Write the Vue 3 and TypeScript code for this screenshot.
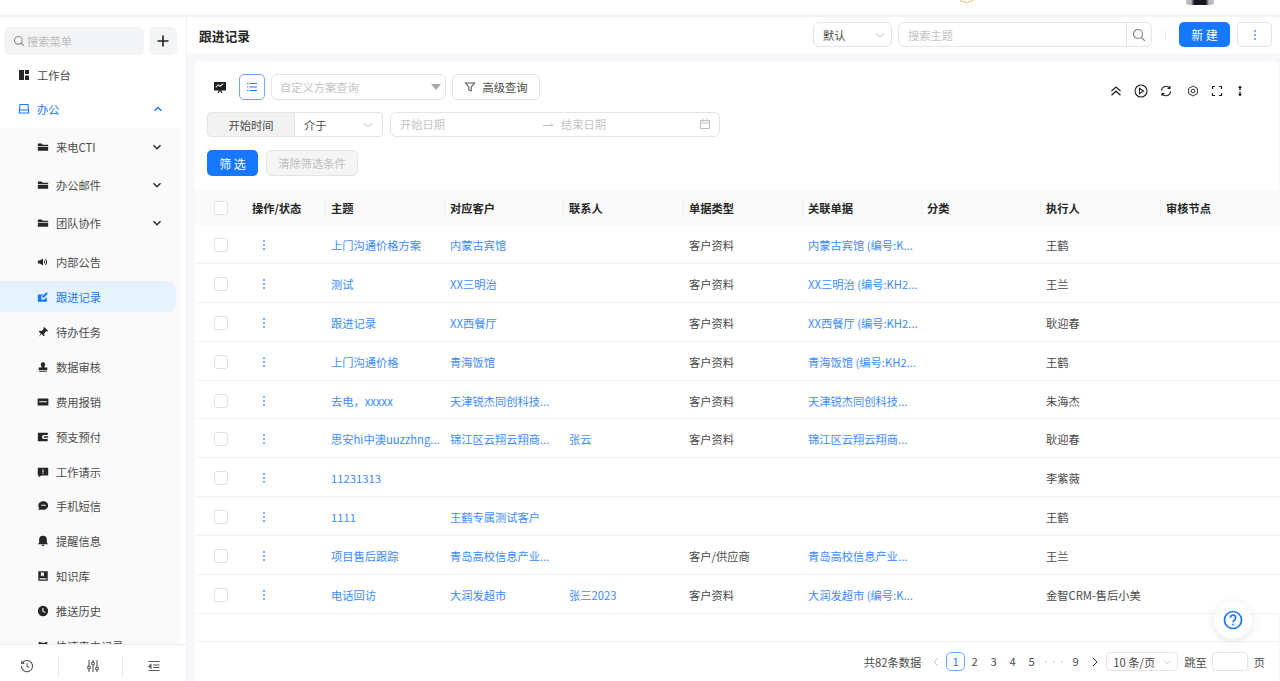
<script setup lang="ts">
interface Nav { label: string; icon: string; arrow?: boolean; active?: boolean }
const icons: Record<string, string> = {
  folder: 'M1 3h4.500l1.200 1.500H13v1.200H1zM1 6.600h12V11.500H1z',
  speaker: 'M1 5.200h2.400L7 3v8L3.400 8.800H1zM8.200 4.600c1.400.8 1.400 4 0 4.800zM10 3.400c2.400 1.400 2.400 5.800 0 7.200l-.6-.8c1.600-1.200 1.600-4.400 0-5.600z',
  edit: 'M1 4h6.500L5 6.500V10h3.500L11.500 7v5.500H1zM10.800 1.500l1.700 1.700L8 7.800H6.300V6z',
  pin: 'M8 1l5 4.600-1.200.8-1-.3-2.300 2.400.3 2.500-1 1-2.300-2.600L2 12.500l2.400-3.800L2 6.600l1-1 2.400.2 2.200-2.400z',
  stamp: 'M7 1.500a2.600 2.600 0 0 1 1.700 4.600V7.500h3.300v3H2v-3h3.300V6.100A2.600 2.600 0 0 1 7 1.500zM2.500 11.300h9v1.200h-9z',
  card: 'M1.500 2.800h11a.8.8 0 0 1 .8.8v6.800a.8.8 0 0 1-.8.8h-11a.8.8 0 0 1-.8-.8V3.600a.8.8 0 0 1 .8-.8zM2.500 6v1.300h9V6z',
  wallet: 'M1 2h11.500v2.800H8a2.200 2.200 0 0 0 0 4.400h4.500V12H1zM8 6h5v2H8z',
  alert: 'M1.500 2h11a.6.6 0 0 1 .6.6v7.800a.6.6 0 0 1-.6.6H5l-3 2v-2h-.5a.6.6 0 0 1-.6-.6V2.600a.6.6 0 0 1 .6-.6zM6.400 4v3.200h1.200V4zM6.400 8v1.200h1.200V8z',
  chat: 'M7.500 1.500c3 0 5.500 2.200 5.500 5s-2.500 5-5.500 5H1.500l1-2.300C1.800 8.300 1.500 7.400 1.500 6.500c0-2.800 2.800-5 6-5zM5 5.500v1.300h5V5.500z',
  bell: 'M7 1a4.500 4.500 0 0 1 4.500 4.500V9l1.500 1.800H1L2.500 9V5.500A4.500 4.500 0 0 1 7 1zM5.500 11.500h3a1.500 1.500 0 0 1-3 0z',
  book: 'M1.500 1.500h11v11h-11zM4.500 2.800v4.700L6.200 6.300 8 7.500V2.800zM3 9.500v1.700h8V9.500z',
  clock: 'M7 1a6 6 0 1 1 0 12A6 6 0 0 1 7 1zM6.300 3.500V7.600l3.300 1.800.6-1-2.700-1.400V3.500z',
  quick: 'M2 2l5 1.500L12 2v7.500L7 11l-5-1.500z',
}
const subTop: Nav[] = [
  { label: '来电CTI', icon: 'folder', arrow: true },
  { label: '办公邮件', icon: 'folder', arrow: true },
  { label: '团队协作', icon: 'folder', arrow: true },
]
const subItems: Nav[] = [
  { label: '内部公告', icon: 'speaker' },
  { label: '跟进记录', icon: 'edit', active: true },
  { label: '待办任务', icon: 'pin' },
  { label: '数据审核', icon: 'stamp' },
  { label: '费用报销', icon: 'card' },
  { label: '预支预付', icon: 'wallet' },
  { label: '工作请示', icon: 'alert' },
  { label: '手机短信', icon: 'chat' },
  { label: '提醒信息', icon: 'bell' },
  { label: '知识库', icon: 'book' },
  { label: '推送历史', icon: 'clock' },
  { label: '快速来电记录', icon: 'quick' },
]
const columns = ['主题', '对应客户', '联系人', '单据类型', '关联单据', '分类', '执行人', '审核节点']
const rows = [
  ['上门沟通价格方案', '内蒙古宾馆', '', '客户资料', '内蒙古宾馆 (编号:K...', '王鹤'],
  ['测试', 'XX三明治', '', '客户资料', 'XX三明治 (编号:KH2...', '王兰'],
  ['跟进记录', 'XX西餐厅', '', '客户资料', 'XX西餐厅 (编号:KH2...', '耿迎春'],
  ['上门沟通价格', '青海饭馆', '', '客户资料', '青海饭馆 (编号:KH2...', '王鹤'],
  ['去电，xxxxx', '天津锐杰同创科技...', '', '客户资料', '天津锐杰同创科技...', '朱海杰'],
  ['思安hi中澳uuzzhng...', '锦江区云翔云翔商...', '张云', '客户资料', '锦江区云翔云翔商...', '耿迎春'],
  ['11231313', '', '', '', '', '李紫薇'],
  ['1111', '王鹤专属测试客户', '', '', '', '王鹤'],
  ['项目售后跟踪', '青岛高校信息产业...', '', '客户/供应商', '青岛高校信息产业...', '王兰'],
  ['电话回访', '大润发超市', '张三2023', '客户资料', '大润发超市 (编号:K...', '金智CRM-售后小美'],
]
const pages = ['2', '3', '4', '5']
</script>

<template>
  <div class="page">
    <header class="topbar">
      <span class="orange-ring"></span>
      <span class="avatar"></span>
    </header>
    <div class="body">
      <aside class="sider">
        <div class="search-line">
          <div class="menu-search">
            <svg width="12" height="12" viewBox="0 0 12 12" fill="none" stroke="#8c8c8c" stroke-width="1.100"><circle cx="5.300" cy="5.300" r="3.800"/><path d="M8.200 8.200l2.600 2.600"/></svg>
            <span>搜索菜单</span>
          </div>
          <button class="plus-btn">
            <svg width="14" height="14" viewBox="0 0 14 14" stroke="#1f1f1f" stroke-width="1.600"><path d="M7 1.500v11M1.500 7h11"/></svg>
          </button>
        </div>
        <div class="menu">
          <div class="top-item">
            <svg class="nav-icon" width="14" height="14" viewBox="0 0 14 14" fill="#262626"><path d="M2 2h5v10H2zM8 2h4v4H8zM8 7.500h4V12H8z"/></svg>
            <span>工作台</span>
          </div>
          <div class="top-item open">
            <svg class="nav-icon" width="14" height="14" viewBox="0 0 14 14" fill="none" stroke="#1677ff" stroke-width="1.100"><path d="M3 2.500h8l.8 8.500H2.200zM2.500 8h9"/></svg>
            <span>办公</span>
            <svg class="arrow" width="10" height="10" viewBox="0 0 10 10" fill="none" stroke="#1677ff" stroke-width="1.400"><path d="M1.500 6.800L5 3.500l3.500 3.300"/></svg>
          </div>
          <div class="submenu">
            <div v-for="n in subTop" :key="n.label" class="sub-item folder-row">
              <svg width="12" height="12" viewBox="0 0 14 14" fill="#262626"><path :d="icons[n.icon]"/></svg>
              <span>{{ n.label }}</span>
              <svg class="arrow" width="10" height="10" viewBox="0 0 10 10" fill="none" stroke="#262626" stroke-width="1.400"><path d="M1.500 3.300L5 6.700l3.500-3.400"/></svg>
            </div>
            <div v-for="n in subItems" :key="n.label" class="sub-item" :class="{ active: n.active }">
              <svg width="12" height="12" viewBox="0 0 14 14" :fill="n.active ? '#1677ff' : '#262626'" fill-rule="evenodd"><path :d="icons[n.icon]"/></svg>
              <span>{{ n.label }}</span>
            </div>
          </div>
        </div>
        <div class="sider-foot">
          <div class="foot-cell">
            <svg class="foot-clock" width="14" height="14" viewBox="0 0 14 14" fill="none" stroke="#595959" stroke-width="1.100"><path d="M2.200 4.200A5.600 5.600 0 1 1 1.400 7M1.700 1.800v2.600h2.600M7 4v3.300l2.300 1.300"/></svg>
          </div>
          <div class="foot-cell">
            <svg class="foot-right" width="14" height="14" viewBox="0 0 14 14" fill="none" stroke="#595959" stroke-width="1.100"><path d="M3 1v6M3 10v3M7 1v2M7 6v7M11 1v7M11 11v2"/><circle cx="3" cy="8.500" r="1.400"/><circle cx="7" cy="4.500" r="1.400"/><circle cx="11" cy="9.500" r="1.400"/></svg>
          </div>
          <div class="foot-cell">
            <svg class="foot-right" width="14" height="14" viewBox="0 0 14 14" fill="none" stroke="#595959" stroke-width="1.100"><path d="M1.500 2.500h11M6 6h6.500M6 8.500h6.500M1.500 11.500h11M4 5.500L1.800 7.200 4 9z"/></svg>
          </div>
        </div>
      </aside>

      <main class="main">
        <div class="titlebar">
          <h1>跟进记录</h1>
          <div class="title-tools">
            <div class="select default-select"><span>默认</span>
              <svg width="12" height="12" viewBox="0 0 12 12" fill="none" stroke="#bfbfbf"><path d="M2 4.200L6 8l4-3.800"/></svg>
            </div>
            <div class="theme-search">
              <span class="ph">搜索主题</span>
              <span class="search-btn">
                <svg width="14" height="14" viewBox="0 0 14 14" fill="none" stroke="#7f7f7f" stroke-width="1.200"><circle cx="6" cy="6" r="4.500"/><path d="M9.300 9.300l3.500 3.500"/></svg>
              </span>
            </div>
            <i class="mini-divider"></i>
            <button class="primary new-btn">新 建</button>
            <button class="more-btn"><i></i><i></i><i></i></button>
          </div>
        </div>

        <section class="card">
          <div class="filters">
            <div class="filter-row first">
              <svg class="board" width="14" height="14" viewBox="0 0 14 14" fill="#1f1f1f" fill-rule="evenodd"><path d="M1 2h12v8.500H8.200l1.300 2.500H8.200L7 10.800 5.800 13H4.500l1.300-2.500H1zM3 7.800l2.400-2.200 1.700 1.300L10.500 4l-.6-.7L7 5.500 5.300 4.300 2.500 6.900z"/></svg>
              <button class="list-btn">
                <svg width="12" height="12" viewBox="0 0 12 12" stroke="#1677ff" stroke-width="1.200"><path d="M3.500 2.500H11M3.500 6H11M3.500 9.500H11M1 2.500h1.200M1 6h1.200M1 9.500h1.200"/></svg>
              </button>
              <div class="plan-select"><span class="ph">自定义方案查询</span>
                <svg width="10" height="8" viewBox="0 0 10 8" fill="#a6a6a6"><path d="M0 1h10L5 7z"/></svg>
              </div>
              <button class="adv-btn">
                <svg width="12" height="12" viewBox="0 0 12 12" fill="none" stroke="#595959" stroke-width="1.100"><path d="M1.500 2h9L7.200 6v4L4.800 9V6z"/></svg>
                <span>高级查询</span>
              </button>
              <div class="table-tools">
                <svg class="t1" width="12" height="12" viewBox="0 0 12 12" fill="none" stroke="#1f1f1f" stroke-width="1.300"><path d="M1.500 6L6 2l4.500 4M1.500 10.200L6 6.200l4.500 4"/></svg>
                <svg class="t2" width="14" height="14" viewBox="0 0 14 14" fill="none" stroke="#1f1f1f" stroke-width="1.100"><circle cx="7" cy="7" r="6"/><path d="M5.500 4.300L9.500 7l-4 2.700z"/></svg>
                <svg class="t3" width="12" height="12" viewBox="0 0 12 12" fill="none" stroke="#1f1f1f" stroke-width="1.100"><path d="M1.500 5.500A4.500 4.500 0 0 1 9.700 3.200M10.500 6.500A4.500 4.500 0 0 1 2.300 8.800M10 1v2.500H7.500M2 11V8.500h2.500"/></svg>
                <svg class="t4" width="12" height="12" viewBox="0 0 12 12" fill="none" stroke="#333" stroke-width="1" stroke-linejoin="round"><path d="M6 1l4.400 2.500v5L6 11 1.600 8.500v-5z"/><circle cx="6" cy="6" r="1.800"/></svg>
                <svg class="t5" width="12" height="12" viewBox="0 0 12 12" fill="none" stroke="#1f1f1f" stroke-width="1.200"><path d="M1.500 4V1.500H4M8 1.500h2.500V4M10.500 8v2.500H8M4 10.500H1.500V8"/></svg>
                <svg class="t6" width="12" height="12" viewBox="0 0 12 12" fill="#1f1f1f"><path d="M6 .5L8 3H6.700v2.200H5.300V3H4zM5.300 6.800h1.400V9H8l-2 2.500L4 9h1.300z"/></svg>
              </div>
            </div>
            <div class="filter-row second">
              <div class="field-label">开始时间</div>
              <div class="select between"><span>介于</span>
                <svg width="12" height="12" viewBox="0 0 12 12" fill="none" stroke="#bfbfbf"><path d="M2 4.200L6 8l4-3.800"/></svg>
              </div>
              <div class="date-range">
                <span class="ph date-a">开始日期</span>
                <svg width="12" height="8" viewBox="0 0 12 8" fill="none" stroke="#bfbfbf"><path d="M1 5.500h10L8.500 3.500"/></svg>
                <span class="ph date-b">结束日期</span>
                <svg class="cal" width="12" height="12" viewBox="0 0 12 12" fill="none" stroke="#bfbfbf"><path d="M1.500 2.500h9v8h-9zM1.500 5h9M4 1v2.500M8 1v2.500"/></svg>
              </div>
            </div>
            <div class="filter-row third">
              <button class="primary filter-btn">筛 选</button>
              <button class="clear-btn">清除筛选条件</button>
            </div>
          </div>

          <table class="grid">
            <colgroup>
              <col class="c50" /><col class="c80" />
              <col class="c119" /><col class="c119" /><col class="c120" /><col class="c119" />
              <col class="c119" /><col class="c119" /><col class="c120" /><col class="c120" />
            </colgroup>
            <thead>
              <tr>
                <th class="check-cell"><span class="check"></span></th>
                <th class="op-head">操作/状态</th>
                <th v-for="c in columns" :key="c"><span class="col-sep"></span>{{ c }}</th>
              </tr>
            </thead>
            <tbody>
              <tr v-for="(r, i) in rows" :key="i">
                <td class="check-cell"><span class="check"></span></td>
                <td class="kebab-cell"><span class="kebab"><i></i><i></i><i></i></span></td>
                <td class="link">{{ r[0] }}</td>
                <td class="link">{{ r[1] }}</td>
                <td class="link">{{ r[2] }}</td>
                <td>{{ r[3] }}</td>
                <td class="link">{{ r[4] }}</td>
                <td></td>
                <td>{{ r[5] }}</td>
                <td></td>
              </tr>
            </tbody>
          </table>

          <div class="spacer"></div>

          <footer class="pager">
            <span class="total">共82条数据</span>
            <svg class="pg-arrow" width="10" height="10" viewBox="0 0 10 10" fill="none" stroke="#bfbfbf"><path d="M7 1L3 5l4 4"/></svg>
            <span class="pg current">1</span>
            <span v-for="p in pages" :key="p" class="pg">{{ p }}</span>
            <span class="pg dots">•••</span>
            <span class="pg">9</span>
            <svg class="pg-arrow" width="10" height="10" viewBox="0 0 10 10" fill="none" stroke="#333"><path d="M3 1l4 4-4 4"/></svg>
            <div class="size-select"><span>10 条/页</span>
              <svg width="10" height="10" viewBox="0 0 12 12" fill="none" stroke="#bfbfbf"><path d="M2 4.200L6 8l4-3.800"/></svg>
            </div>
            <span class="jump">跳至</span>
            <span class="jump-input"></span>
            <span class="jump-end">页</span>
          </footer>
        </section>
      </main>
    </div>

    <button class="help">
      <svg width="20" height="20" viewBox="0 0 20 20" fill="none" stroke="#1677ff" stroke-width="1.700"><circle cx="10" cy="10" r="8.500"/><path d="M7.300 7.800A2.700 2.700 0 1 1 11.500 10c-1 .7-1.500 1.100-1.500 2.200"/><path d="M10 13.700v1.500"/></svg>
    </button>
  </div>
</template>

<style>
html, body { margin: 0; padding: 0; }
</style>

<style scoped>
.page {
  position: relative;
  width: 1280px;
  height: 681px;
  overflow: hidden;
  background: #f7f8fc;
  color: #4a4a4a;
  font-family: "Noto Sans CJK SC", "Noto Sans", sans-serif;
  font-size: 11.25px;
  display: flex;
  flex-direction: column;
}
button { font-family: inherit; font-size: 11.25px; cursor: pointer; padding: 0; }
.topbar {
  position: relative;
  height: 15px;
  flex: none;
  background: #fff;
  border-bottom: 2px solid #f3f3f3;
  overflow: hidden;
}
.orange-ring {
  position: absolute;
  left: 956px;
  top: -20px;
  width: 19px;
  height: 21px;
  border: 1px solid #f5b95f;
  border-radius: 50%;
}
.avatar {
  position: absolute;
  left: 1186px;
  top: -10px;
  width: 28px;
  height: 15px;
  border-radius: 3px;
  background: linear-gradient(90deg, #b9bdc2 0 18%, #14171c 30% 70%, #b9bdc2 82%);
}
.body { flex: 1; min-height: 0; display: flex; }
.sider {
  width: 186px;
  flex: none;
  background: #fff;
  border-right: 1px solid #efefef;
  display: flex;
  flex-direction: column;
}
.search-line { display: flex; gap: 5px; padding: 10px 8px 0 4px; height: 28px; flex: none; }
.menu-search {
  width: 140px;
  height: 28px;
  background: #f3f4f6;
  border-radius: 6px;
  display: flex;
  align-items: center;
  gap: 2px;
  padding-left: 9px;
  box-sizing: border-box;
  color: #bdbdbd;
}
.plus-btn {
  width: 28px;
  height: 28px;
  border: none;
  border-radius: 6px;
  background: #f3f4f6;
  display: flex;
  align-items: center;
  justify-content: center;
}
.menu { flex: 1; min-height: 0; overflow: hidden; }
.top-item {
  height: 35px;
  display: flex;
  align-items: center;
  padding: 0 23px 0 17px;
  gap: 6px;
  color: #4a4a4a;
}
.top-item:first-child { margin-top: 2px; }
.top-item.open { color: #1677ff; height: 34px; }
.nav-icon { flex: none; }
.arrow { margin-left: auto; }
.submenu { width: 180px; background: #fafafa; margin-top: 2px; }
.sub-item {
  height: 34.9px;
  display: flex;
  align-items: center;
  padding: 0 17px 0 37px;
  gap: 7px;
  color: #4a4a4a;
  width: 176px;
  box-sizing: border-box;
}
.sub-item .arrow { margin-right: -3px; }
.folder-row { height: 38px; }
.folder-row + .sub-item:not(.folder-row) { height: 39px; }
.sub-item.active {
  height: 31px;
  margin-bottom: 2.500px;
  background: #e6f3ff;
  border-radius: 0 8px 8px 0;
  color: #1677ff;
}
.sider-foot {
  flex: none;
  height: 37px;
  background: #fff;
  border-top: 1px solid #efefef;
  display: flex;
  align-items: center;
  box-sizing: border-box;
  padding-top: 5px;
}
.foot-cell {
  width: 58px;
  height: 21px;
  display: flex;
  align-items: center;
  justify-content: center;
}
.foot-clock { margin-left: -4px; }
.foot-right { margin-left: 4px; }
.foot-cell:nth-child(2) { width: 65px; border-left: 1px solid #e8e8e8; border-right: 1px solid #e8e8e8; box-sizing: border-box; }
.main { flex: 1; min-width: 0; display: flex; flex-direction: column; }
.titlebar {
  height: 36px;
  flex: none;
  background: #fff;
  display: flex;
  align-items: center;
  justify-content: space-between;
  padding: 0 8px 1px 12px;
  box-sizing: border-box;
}
.titlebar h1 { margin: 2px 0 0; font-size: 12.75px; font-weight: 700; color: #262626; }
.title-tools { display: flex; align-items: center; }
.select {
  height: 25px;
  display: flex;
  align-items: center;
  justify-content: space-between;
  background: #fff;
  border: 1px solid #e4e4e4;
  box-sizing: border-box;
}
.default-select { width: 79px; border-radius: 6px; padding: 0 5px 0 9px; margin-right: 6px; }
.theme-search {
  width: 254px;
  height: 25px;
  border: 1px solid #e4e4e4;
  border-radius: 6px;
  box-sizing: border-box;
  display: flex;
  align-items: center;
  justify-content: space-between;
  padding-left: 9px;
}
.search-btn {
  width: 24px;
  height: 100%;
  border-left: 1px solid #e4e4e4;
  display: flex;
  align-items: center;
  justify-content: center;
}
.ph { color: #c4c4c4; }
.mini-divider { width: 1px; height: 10px; background: #ececec; margin: 0 13px; }
.primary { background: #1677ff; color: #fff; border: none; border-radius: 5px; font-size: 12px; }
.new-btn { width: 51px; height: 25px; margin-right: 7px; }
.more-btn {
  width: 35px;
  height: 25px;
  background: #fff;
  border: 1px solid #e4e4e4;
  border-radius: 5px;
  display: flex;
  flex-direction: column;
  align-items: center;
  justify-content: center;
  gap: 2px;
}
.more-btn i, .kebab i { display: block; width: 2px; height: 2px; border-radius: 50%; background: #4d94ff; }
.card {
  flex: 1;
  min-height: 0;
  margin: 8px 1px 0 8px;
  background: #fff;
  border-radius: 6px 6px 0 0;
  display: flex;
  flex-direction: column;
}
.filters { padding: 13px 0 14px 12px; flex: none; }
.filter-row { display: flex; align-items: center; }
.first { height: 26px; }
.board { margin: 0 12px 0 6px; flex: none; }
.list-btn {
  width: 26px;
  height: 26px;
  background: #fff;
  border: 1px solid #6aa8ff;
  border-radius: 5px;
  display: flex;
  align-items: center;
  justify-content: center;
  margin-right: 6px;
}
.plan-select {
  width: 175px;
  height: 26px;
  border: 1px solid #e4e4e4;
  border-radius: 6px;
  box-sizing: border-box;
  display: flex;
  align-items: center;
  justify-content: space-between;
  padding: 0 4px 0 8px;
  margin-right: 6px;
}
.adv-btn {
  width: 88px;
  height: 26px;
  background: #fff;
  border: 1px solid #e4e4e4;
  border-radius: 5px;
  color: #4a4a4a;
  display: flex;
  align-items: center;
  justify-content: center;
  gap: 6px;
}
.table-tools { margin-left: auto; margin-right: 33px; display: flex; align-items: center; padding-top: 7px; }
.t2, .t3, .t4, .t5, .t6 { display: block; }
.t2 { margin-left: 12px; }
.t3 { margin-left: 12px; }
.t4 { margin-left: 15px; }
.t5 { margin-left: 12px; }
.t6 { margin-left: 11px; }
.second { height: 25px; margin-top: 12px; }
.field-label {
  width: 88px;
  height: 25px;
  line-height: 24px;
  text-align: center;
  background: #f2f2f2;
  border: 1px solid #e4e4e4;
  border-radius: 4px 0 0 4px;
  box-sizing: border-box;
  color: #4a4a4a;
}
.between {
  width: 88px;
  border-left: none;
  border-radius: 0 4px 4px 0;
  padding: 0 8px 0 9px;
  margin-right: 7px;
}
.date-range {
  width: 330px;
  height: 25px;
  border: 1px solid #e4e4e4;
  border-radius: 6px;
  box-sizing: border-box;
  display: flex;
  align-items: center;
  padding: 0 8px 1px 9px;
}
.date-a { width: 142px; }
.date-b { margin-left: 7px; }
.cal { margin-left: auto; }
.third { height: 26px; margin-top: 13px; gap: 8px; }
.filter-btn { width: 51px; height: 26px; }
.clear-btn {
  width: 92px;
  height: 26px;
  background: #f5f5f5;
  border: 1px solid #e4e4e4;
  border-radius: 5px;
  color: #c0c0c0;
}
.grid {
  width: 1085px;
  table-layout: fixed;
  border-collapse: separate;
  border-spacing: 0;
  flex: none;
}
.c50 { width: 50px; }
.c80 { width: 80px; }
.c119 { width: 119px; }
.c120 { width: 120px; }
th, td {
  padding: 0 6px;
  text-align: left;
  white-space: nowrap;
  overflow: hidden;
  box-sizing: border-box;
}
th {
  position: relative;
  height: 35px;
  background: #fafafa;
  color: #262626;
  font-weight: 700;
}
td {
  height: 38.9px;
  padding-top: 2px;
  border-bottom: 1px solid #f2f2f2;
  color: #4a4a4a;
  background: #fff;
}
.col-sep {
  position: absolute;
  left: 0;
  top: 9px;
  width: 1px;
  height: 16px;
  background: #efefef;
}
.op-head { padding-left: 7px; }
.link { color: #3d8bff; }
th.check-cell, td.check-cell { padding-left: 19px; padding-right: 0; }
.check {
  display: block;
  width: 12px;
  height: 12px;
  border: 1px solid #e2e2e2;
  border-radius: 3px;
  background: #fff;
}
.kebab-cell { padding-left: 18px; }
.kebab { display: flex; flex-direction: column; gap: 2px; width: 2px; }
.spacer { flex: 1; border-bottom: 1px solid #f2f2f2; }
.pager {
  height: 39px;
  flex: none;
  display: flex;
  align-items: center;
  justify-content: flex-end;
  padding-right: 14px;
  color: #4a4a4a;
}
.total { margin-right: 5px; }
.pg-arrow { margin: 0 5px; }
.pg { width: 19px; text-align: center; line-height: 19px; }
.pg.current {
  height: 19px;
  box-sizing: border-box;
  line-height: 17px;
  border: 1px solid #6aa8ff;
  border-radius: 5px;
  color: #1677ff;
}
.dots { color: #c8c8c8; font-size: 8px; width: 25px; }
.size-select {
  width: 72px;
  height: 19px;
  border: 1px solid #e6e6e6;
  border-radius: 4px;
  box-sizing: border-box;
  display: flex;
  align-items: center;
  justify-content: space-between;
  padding: 0 5px 0 6px;
  margin-left: 1px;
}
.jump { margin: 0 5px 0 6px; }
.jump-input {
  width: 36px;
  height: 19px;
  border: 1px solid #e6e6e6;
  border-radius: 4px;
  box-sizing: border-box;
}
.jump-end { margin-left: 6px; }
.help {
  position: absolute;
  left: 1214px;
  top: 601px;
  width: 38px;
  height: 38px;
  border: none;
  border-radius: 50%;
  background: #fff;
  box-shadow: 0 2px 10px rgba(0, 0, 0, 0.1);
  display: flex;
  align-items: center;
  justify-content: center;
}
</style>
